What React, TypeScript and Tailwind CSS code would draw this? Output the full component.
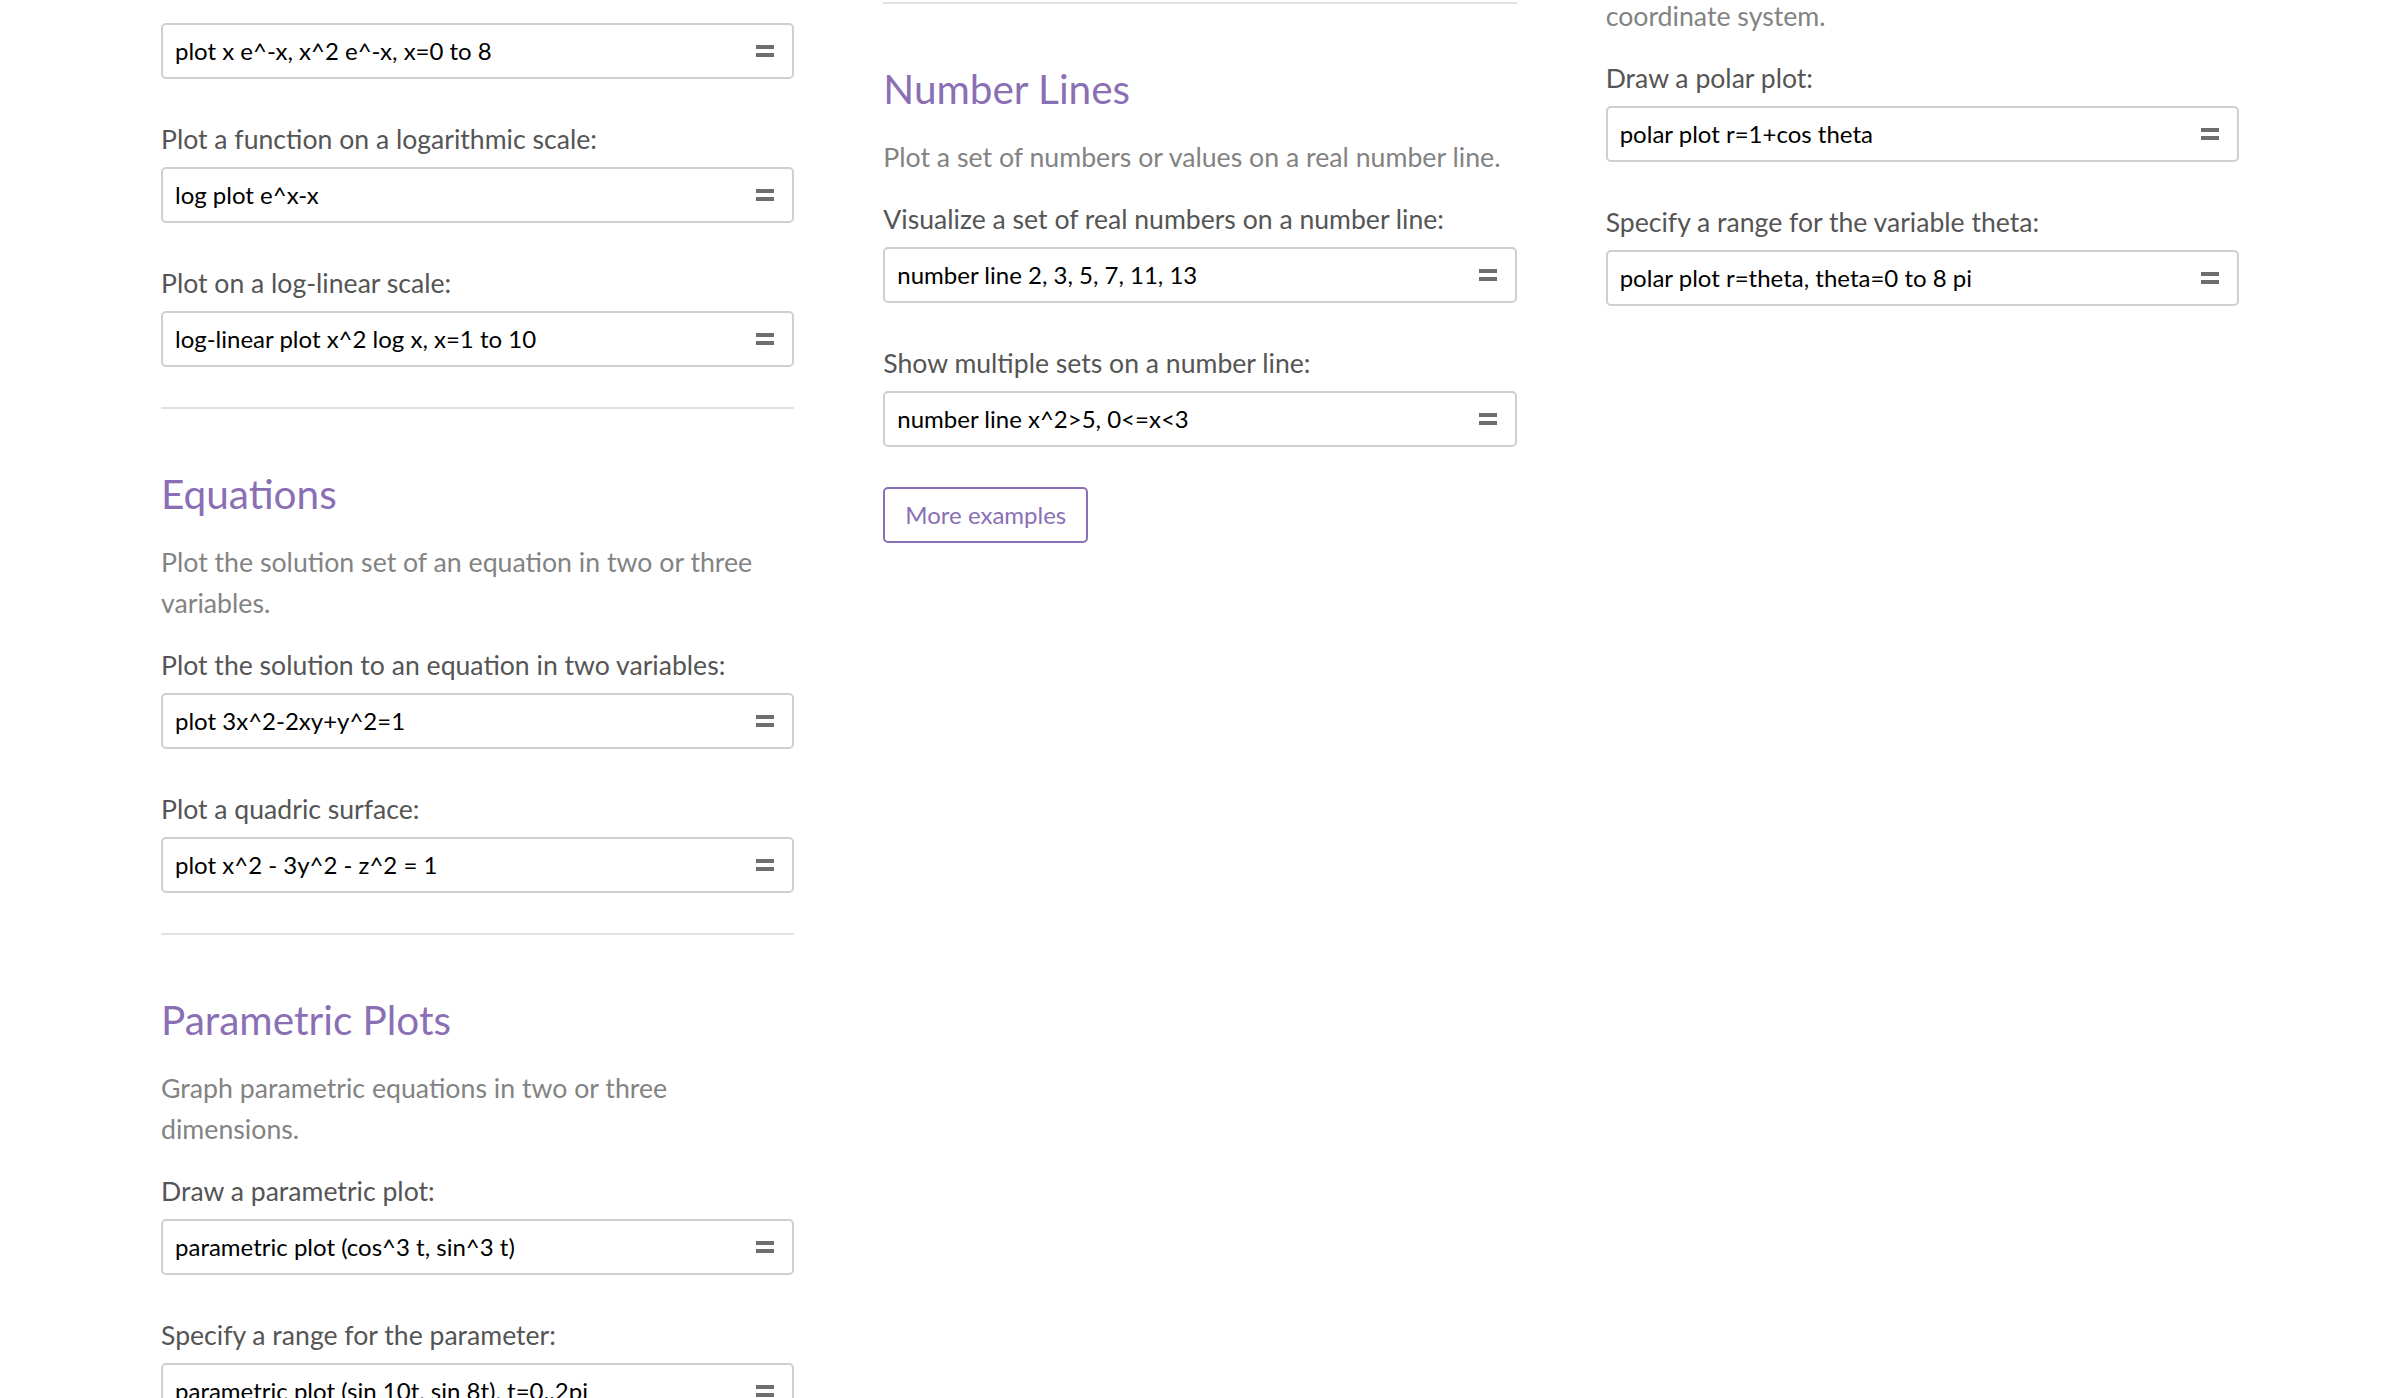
// Example gallery page, three columns of sections with query inputs.

const font = 'font-["Lato","Noto_Sans",sans-serif]'

function EqualsIcon() {
  return (
    <svg width="18" height="12" viewBox="0 0 18 12" className="shrink-0">
      <rect x="0" y="0" width="18" height="4" fill="#6e6e6e" />
      <rect x="0" y="8" width="18" height="4" fill="#6e6e6e" />
    </svg>
  )
}

function QueryInput({ value, className = '' }: { value: string; className?: string }) {
  return (
    <div
      className={`flex h-[56px] items-center justify-between rounded-[5px] border-2 border-[#cfcfcf] bg-white pl-[12px] pr-[18px] ${className}`}
    >
      <span className="text-[24px] leading-none text-black whitespace-nowrap">{value}</span>
      <EqualsIcon />
    </div>
  )
}

function Example({ label, query, first }: { label: string; query: string; first?: boolean }) {
  return (
    <div className={first ? 'mt-[21px]' : 'mt-[40px]'}>
      <div className="text-[26.6px] leading-[40px] text-[#555555]">{label}</div>
      <QueryInput value={query} className="mt-[8px]" />
    </div>
  )
}

function Divider({ className = '' }: { className?: string }) {
  return <div className={`h-[2px] bg-[#e2e2e2] ${className}`} />
}

function Section({
  title,
  desc,
  examples,
}: {
  title: string
  desc: string
  examples: { label: string; query: string }[]
}) {
  return (
    <section className="mt-[61px]">
      <h2 className="text-[40.5px] leading-[48px] text-[#8b6fb5]">{title}</h2>
      <p className="mt-[24px] text-[26.7px] leading-[41px] text-[#838383]">{desc}</p>
      {examples.map((ex, i) => (
        <Example key={ex.label} label={ex.label} query={ex.query} first={i === 0} />
      ))}
    </section>
  )
}

export default function App() {
  return (
    <div className={`h-[1398px] overflow-hidden bg-white ${font}`}>
      <div className="grid grid-cols-3 gap-x-[89px] px-[161px]">
        {/* left column */}
        <div>
          <QueryInput value="plot x e^-x, x^2 e^-x, x=0 to 8" className="mt-[23px]" />
          <Example label="Plot a function on a logarithmic scale:" query="log plot e^x-x" />
          <Example label="Plot on a log-linear scale:" query="log-linear plot x^2 log x, x=1 to 10" />
          <Divider className="mt-[40px]" />
          <Section
            title="Equations"
            desc="Plot the solution set of an equation in two or three variables."
            examples={[
              { label: 'Plot the solution to an equation in two variables:', query: 'plot 3x^2-2xy+y^2=1' },
              { label: 'Plot a quadric surface:', query: 'plot x^2 - 3y^2 - z^2 = 1' },
            ]}
          />
          <Divider className="mt-[40px]" />
          <Section
            title="Parametric Plots"
            desc="Graph parametric equations in two or three dimensions."
            examples={[
              { label: 'Draw a parametric plot:', query: 'parametric plot (cos^3 t, sin^3 t)' },
              { label: 'Specify a range for the parameter:', query: 'parametric plot (sin 10t, sin 8t), t=0..2pi' },
            ]}
          />
        </div>

        {/* middle column */}
        <div>
          <Divider className="mt-[2px]" />
          <Section
            title="Number Lines"
            desc="Plot a set of numbers or values on a real number line."
            examples={[
              { label: 'Visualize a set of real numbers on a number line:', query: 'number line 2, 3, 5, 7, 11, 13' },
              { label: 'Show multiple sets on a number line:', query: 'number line x^2>5, 0<=x<3' },
            ]}
          />
          <button
            type="button"
            className="mt-[40px] h-[56px] rounded-[5px] border-2 border-[#8b6fb5] px-[20px] text-[24px] text-[#8b6fb5]"
          >
            More examples
          </button>
        </div>

        {/* right column, scrolled past its heading */}
        <div>
          <p className="-mt-[4px] text-[26.7px] leading-[41px] text-[#838383]">coordinate system.</p>
          <Example label="Draw a polar plot:" query="polar plot r=1+cos theta" first />
          <Example label="Specify a range for the variable theta:" query="polar plot r=theta, theta=0 to 8 pi" />
        </div>
      </div>
    </div>
  )
}
